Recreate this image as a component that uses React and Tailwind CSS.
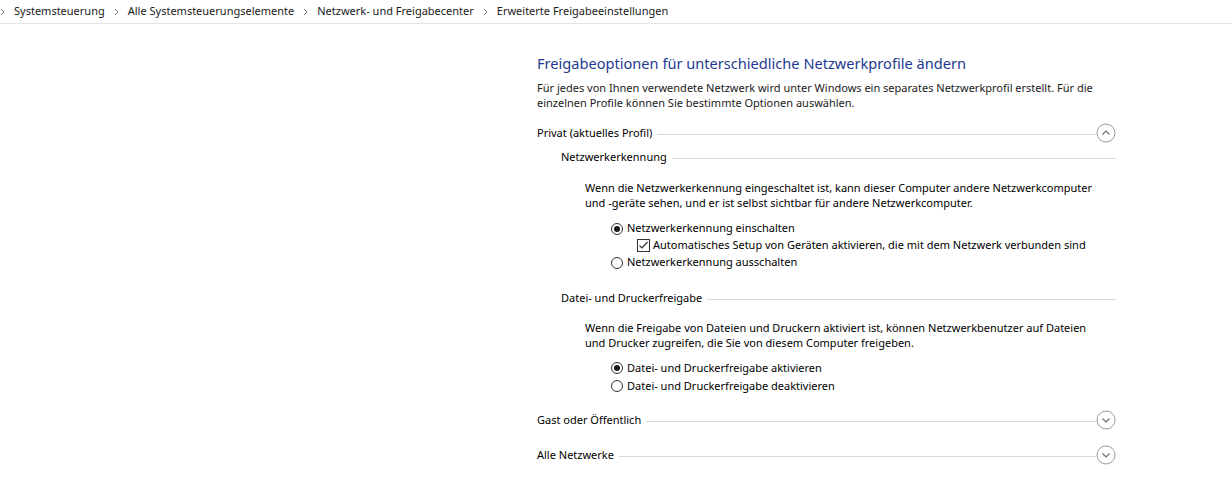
import React from "react"

const crumbs = ["Systemsteuerung", "Alle Systemsteuerungselemente", "Netzwerk- und Freigabecenter", "Erweiterte Freigabeeinstellungen"]

const Sep = () => (
  <svg width="5" height="8" viewBox="0 0 5 8" className="shrink-0">
    <path d="M1 1 L4 4 L1 7" fill="none" stroke="#7a7a7a" strokeWidth="1" />
  </svg>
)

const Toggle = ({ up }) => (
  <svg width="20" height="20" viewBox="0 0 20 20" className="shrink-0">
    <circle cx="10" cy="10" r="9" fill="#fff" stroke="#9a9a9a" strokeWidth="1" />
    <path d={up ? "M6.5 11.5 L10 8 L13.5 11.5" : "M6.5 8.5 L10 12 L13.5 8.5"} fill="none" stroke="#6e6e6e" strokeWidth="1.2" />
  </svg>
)

const Radio = ({ on }) => (
  <span className="w-[12px] h-[12px] rounded-full border border-[#333] flex items-center justify-center shrink-0 mr-[4px]">
    {on && <span className="w-[6px] h-[6px] rounded-full bg-[#1a1a1a]" />}
  </span>
)

const Check = () => (
  <svg width="13" height="13" viewBox="0 0 13 13" className="shrink-0 mr-[3px]">
    <rect x="0.5" y="0.5" width="12" height="12" fill="#fff" stroke="#333" />
    <path d="M2.5 6.5 L5 9 L10.5 3" fill="none" stroke="#333" strokeWidth="1.2" />
  </svg>
)

// section heading with a rule running to the right edge
const Heading = ({ title, toggle, className }) => (
  <div className={`flex items-center ${className}`}>
    <span className="whitespace-nowrap">{title}</span>
    <span className="flex-1 h-px bg-[#d9d9d9] ml-[5px] mt-[3px]" />
    {toggle && <Toggle up={toggle === "up"} />}
  </div>
)

export default function App() {
  return (
    <div className="w-[1232px] h-[501px] bg-white text-black text-[11px] font-['Noto_Sans',sans-serif] overflow-hidden whitespace-nowrap">
      <div className="h-[24px] border-b border-[#e3e3e3] flex items-center gap-[9px]">
        <Sep />
        {crumbs.map((c, i) => (
          <React.Fragment key={c}>
            <span className="text-[#1a1a1a]">{c}</span>
            {i < crumbs.length - 1 && <Sep />}
          </React.Fragment>
        ))}
      </div>

      <div className="pl-[537px] pr-[116px]">
        <h1 className="mt-[29px] h-[20px] leading-[20px] text-[14.6px] text-[#1e3a8f]">
          Freigabeoptionen für unterschiedliche Netzwerkprofile ändern
        </h1>
        <p className="mt-[7px] leading-[15px] text-[#1a1a1a]">
          Für jedes von Ihnen verwendete Netzwerk wird unter Windows ein separates Netzwerkprofil erstellt. Für die
          <br />
          einzelnen Profile können Sie bestimmte Optionen auswählen.
        </p>

        <Heading title="Privat (aktuelles Profil)" toggle="up" className="mt-[11px] h-[24px]" />

        <div className="pl-[24px]">
          <Heading title="Netzwerkerkennung" className="mt-[2px] h-[20px]" />
          <div className="pl-[24px]">
            <p className="mt-[13px] leading-[15px]">
              Wenn die Netzwerkerkennung eingeschaltet ist, kann dieser Computer andere Netzwerkcomputer
              <br />
              und -geräte sehen, und er ist selbst sichtbar für andere Netzwerkcomputer.
            </p>
            <div className="mt-[10px] pl-[26px]">
              <label className="h-[17px] flex items-center"><Radio on />Netzwerkerkennung einschalten</label>
              <label className="h-[17px] flex items-center pl-[26px]"><Check />Automatisches Setup von Geräten aktivieren, die mit dem Netzwerk verbunden sind</label>
              <label className="h-[17px] flex items-center"><Radio />Netzwerkerkennung ausschalten</label>
            </div>
          </div>

          <Heading title="Datei- und Druckerfreigabe" className="mt-[17px] h-[20px]" />
          <div className="pl-[24px]">
            <p className="mt-[12px] leading-[15px]">
              Wenn die Freigabe von Dateien und Druckern aktiviert ist, können Netzwerkbenutzer auf Dateien
              <br />
              und Drucker zugreifen, die Sie von diesem Computer freigeben.
            </p>
            <div className="mt-[9px] pl-[26px]">
              <label className="h-[18px] flex items-center"><Radio on />Datei- und Druckerfreigabe aktivieren</label>
              <label className="h-[18px] flex items-center"><Radio />Datei- und Druckerfreigabe deaktivieren</label>
            </div>
          </div>
        </div>

        <Heading title="Gast oder Öffentlich" toggle="down" className="mt-[13px] h-[24px]" />
        <Heading title="Alle Netzwerke" toggle="down" className="mt-[11px] h-[24px]" />
      </div>
    </div>
  )
}
